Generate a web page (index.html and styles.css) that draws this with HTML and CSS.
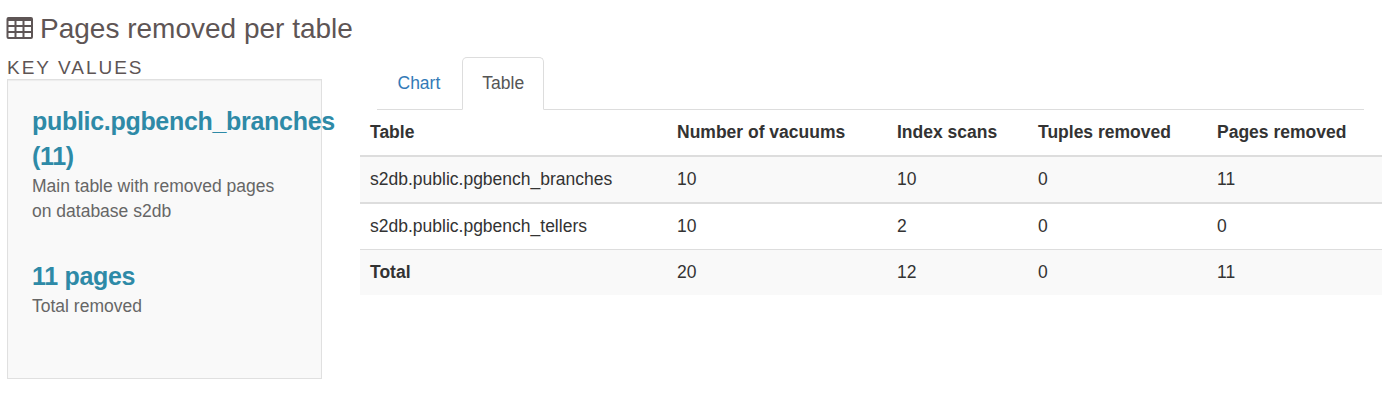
FILE: index.html
```html
<!DOCTYPE html>
<html>

<head>
    <meta charset="utf-8">
    <title>Pages removed per table</title>
    <link rel="stylesheet" href="styles.css">
</head>

<body>
<h2 class="title">
    <svg class="icon-table" width="27" height="22" viewBox="0 0 27 22">
        <path fill="currentColor" fill-rule="evenodd" d="M2.500 0H25Q27 0 27 2V20Q27 22 25 22H2.500Q0.500 22 0.500 20V2Q0.500 0 2.500 0ZM2.500 4V8H8.500V4ZM10.500 4V8H16.500V4ZM18.500 4V8H25V4ZM2.500 10V14H8.500V10ZM10.500 10V14H16.500V10ZM18.500 10V14H25V10ZM2.500 16V20H8.500V16ZM10.500 16V20H16.500V16ZM18.500 16V20H25V16Z"/>
    </svg>
    <span>Pages removed per table</span>
</h2>
<div class="row">
    <div class="key-values">
        <h5>Key values</h5>
        <div class="key-figures">
            <ul>
                <li>
                    <span class="figure">public.pgbench_branches (11)</span>
                    <span class="figure-label">Main table with removed pages on database s2db</span>
                </li>
                <li>
                    <span class="figure">11 pages</span>
                    <span class="figure-label">Total removed</span>
                </li>
            </ul>
        </div>
    </div>
    <div class="tabbable">
        <ul class="nav-tabs">
            <li><a href="#chart">Chart</a></li>
            <li class="active"><a href="#table">Table</a></li>
        </ul>
        <table class="table">
            <colgroup>
                <col class="col-table">
                <col class="col-vacuums">
                <col class="col-scans">
                <col class="col-tuples">
                <col class="col-pages">
            </colgroup>
            <thead>
                <tr>
                    <th>Table</th>
                    <th>Number of vacuums</th>
                    <th>Index scans</th>
                    <th>Tuples removed</th>
                    <th>Pages removed</th>
                </tr>
            </thead>
            <tbody>
                <tr>
                    <td>s2db.public.pgbench_branches</td>
                    <td>10</td>
                    <td>10</td>
                    <td>0</td>
                    <td>11</td>
                </tr>
            </tbody>
            <tbody>
                <tr class="even">
                    <td>s2db.public.pgbench_tellers</td>
                    <td>10</td>
                    <td>2</td>
                    <td>0</td>
                    <td>0</td>
                </tr>
                <tr>
                    <th>Total</th>
                    <td>20</td>
                    <td>12</td>
                    <td>0</td>
                    <td>11</td>
                </tr>
            </tbody>
        </table>
    </div>
</div>
</body>

</html>
```

FILE: styles.css
```css
* {
    box-sizing: border-box;
    margin: 0;
    padding: 0;
}

body {
    padding: 11px 0 0 7px;
    font-family: "Liberation Sans", Arial, sans-serif;
    font-size: 17.5px;
    line-height: 25px;
    color: #333;
    background: #fff;
}

li {
    list-style: none;
}

.title {
    display: flex;
    align-items: center;
    gap: 7px;
    height: 34px;
    margin-left: -1px;
    font-size: 28px;
    font-weight: normal;
    line-height: 34px;
    color: #5e5555;
}

.title span {
    padding-top: 2px;
}

.row {
    display: flex;
    padding-top: 12px;
}

.key-values {
    width: 315px;
    margin-right: 38px;
}

.key-values h5 {
    height: 22px;
    font-size: 19px;
    font-weight: normal;
    line-height: 22px;
    letter-spacing: 2px;
    text-transform: uppercase;
    color: #5e5555;
}

.key-figures {
    height: 300px;
    padding: 24px;
    border: 1px solid #e0e0e0;
    background: #f9f9f9;
    box-shadow: inset 0 1px 1px rgba(0, 0, 0, 0.05);
}

.key-figures li {
    margin-bottom: 35px;
}

.figure {
    display: block;
    font-size: 25px;
    font-weight: bold;
    line-height: 35px;
    letter-spacing: -0.3px;
    color: #2e8aa7;
}

.figure-label {
    display: block;
    color: #666;
}

.tabbable {
    width: 1022px;
}

.nav-tabs {
    display: flex;
    height: 53px;
    margin: 0 18px 0 17px;
    border-bottom: 1px solid #ddd;
}

.nav-tabs a {
    display: block;
    height: 53px;
    margin-right: 2px;
    padding: 12.5px 18.5px 12.5px 19.5px;
    border: 1px solid transparent;
    border-radius: 5px 5px 0 0;
    color: #337ab7;
    text-decoration: none;
}

.nav-tabs .active a {
    border-color: #ddd;
    border-bottom-color: #fff;
    background: #fff;
    color: #555;
}

.table {
    width: 1022px;
    table-layout: fixed;
    border-spacing: 0;
}

.col-table {
    width: 307px;
}

.col-vacuums {
    width: 220px;
}

.col-scans {
    width: 141px;
}

.col-tuples {
    width: 179px;
}

.table th,
.table td {
    padding: 10px;
    text-align: left;
}

.table thead th {
    border-bottom: 2px solid #ddd;
}

.table tbody tr {
    background: #f9f9f9;
}

.table tbody .even {
    background: #fff;
}

.table .even td {
    border-top: 2px solid #ddd;
    border-bottom: 1px solid #ddd;
}
```
